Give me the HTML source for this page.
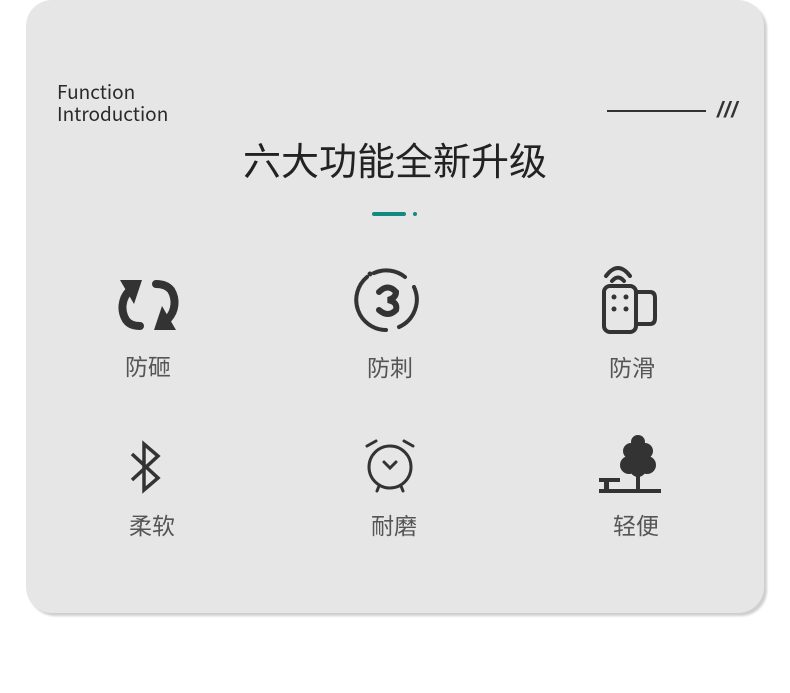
<!DOCTYPE html>
<html><head><meta charset="utf-8"><style>
body{margin:0;width:790px;height:693px;background:#fff;position:relative;overflow:hidden;font-family:"Liberation Sans","Noto Sans CJK SC",sans-serif}
.card{position:absolute;left:26px;top:0;width:738px;height:613px;background:#e6e6e6;border-radius:26px;box-shadow:3px 3px 2px #cfcfcf}
.fi{position:absolute;left:57px;top:81px;font-size:19px;line-height:22px;color:#2a2a2a;font-family:"Noto Sans CJK SC",sans-serif}
.ln{position:absolute;left:607px;top:110px;width:99px;height:1.5px;background:#333}
.sl{position:absolute;left:717px;top:97px;font-size:22px;font-weight:bold;font-style:italic;color:#333;letter-spacing:1px}
.t{position:absolute;left:0;width:790px;top:131px;text-align:center;font-size:38px;font-weight:400;color:#222;font-family:"Noto Sans CJK SC",sans-serif}
.bar{position:absolute;left:372px;top:212px;width:34px;height:4px;border-radius:2px;background:#138a80}
.dot{position:absolute;left:413px;top:212px;width:4px;height:4px;border-radius:2px;background:#138a80}
.lb{position:absolute;width:120px;text-align:center;font-size:23px;color:#555;font-family:"Noto Sans CJK SC",sans-serif}
svg{position:absolute}
</style></head><body>
<div class="card"></div>
<div class="fi">Function<br>Introduction</div>
<div class="ln"></div><div class="sl">///</div>
<div class="t">六大功能全新升级</div>
<div class="bar"></div><div class="dot"></div>

<svg style="left:116px;top:276px" width="66" height="58" viewBox="0 0 66 58"><g fill="none" stroke="#333" stroke-width="8" stroke-linecap="round">
<path d="M13 15 A24 24 0 0 0 10 44 Q14 50 24 50"/><path d="M52 43 A24 24 0 0 0 55 14 Q50 8 40 8"/></g>
<path d="M4 4 L26 4 L18 28 Z" fill="#333"/><path d="M60 54 L38 54 L46 30 Z" fill="#333"/></svg>

<svg style="left:352px;top:265px" width="72" height="70" viewBox="0 0 72 70"><g fill="none" stroke="#333" stroke-width="4" stroke-linecap="round">
<path d="M15 12 A30 30 0 0 0 34 65"/><path d="M22 8 A30 30 0 0 1 53 12"/><path d="M62 22 A30 30 0 0 1 47 62"/>
<path d="M27 27 Q36 18 44 27 Q44 33 36 35 Q46 37 44 45 Q36 53 27 45" stroke-width="6"/></g><circle cx="18" cy="9" r="2.5" fill="#333"/></svg>

<svg style="left:600px;top:262px" width="60" height="72" viewBox="0 0 60 72"><g fill="none" stroke="#333" stroke-width="4" stroke-linecap="round">
<path d="M6 14 Q18 -2 30 14"/><path d="M12 19 Q18 12 24 19"/>
<rect x="4" y="24" width="32" height="46" rx="6"/><path d="M36 30 H50 Q55 30 55 36 V56 Q55 62 50 62 H36"/></g>
<g fill="#333"><circle cx="14" cy="35" r="2.5"/><circle cx="26" cy="35" r="2.5"/><circle cx="14" cy="47" r="2.5"/><circle cx="26" cy="47" r="2.5"/></g></svg>

<svg style="left:128px;top:440px" width="36" height="54" viewBox="0 0 36 54"><path d="M4 14 L30 38 L16 50 V4 L30 16 L4 40" fill="none" stroke="#333" stroke-width="3.5"/></svg>

<svg style="left:362px;top:436px" width="56" height="58" viewBox="0 0 56 58"><g fill="none" stroke="#333" stroke-width="3" stroke-linecap="round">
<path d="M5 10 L14 5"/><path d="M42 5 L51 10"/><circle cx="28" cy="31" r="21"/><path d="M22 26 L28 32 L34 26"/><path d="M17 50 L15 55"/><path d="M39 50 L41 55"/></g></svg>

<svg style="left:598px;top:434px" width="64" height="62" viewBox="0 0 64 62"><g fill="#333">
<circle cx="40" cy="8" r="7"/><circle cx="33" cy="17" r="8"/><circle cx="47" cy="17" r="8"/><circle cx="31" cy="31" r="9"/><circle cx="49" cy="31" r="9"/><circle cx="40" cy="25" r="10"/><circle cx="40" cy="35" r="8"/>
<rect x="38" y="36" width="4" height="20"/><rect x="1" y="55" width="62" height="4"/><rect x="1" y="44" width="21" height="4"/><rect x="6" y="47" width="5" height="9"/></g></svg>

<div class="lb" style="left:88px;top:348px">防砸</div>
<div class="lb" style="left:330px;top:349px">防刺</div>
<div class="lb" style="left:572px;top:349px">防滑</div>
<div class="lb" style="left:92px;top:507px">柔软</div>
<div class="lb" style="left:334px;top:507px">耐磨</div>
<div class="lb" style="left:576px;top:507px">轻便</div>
</body></html>
